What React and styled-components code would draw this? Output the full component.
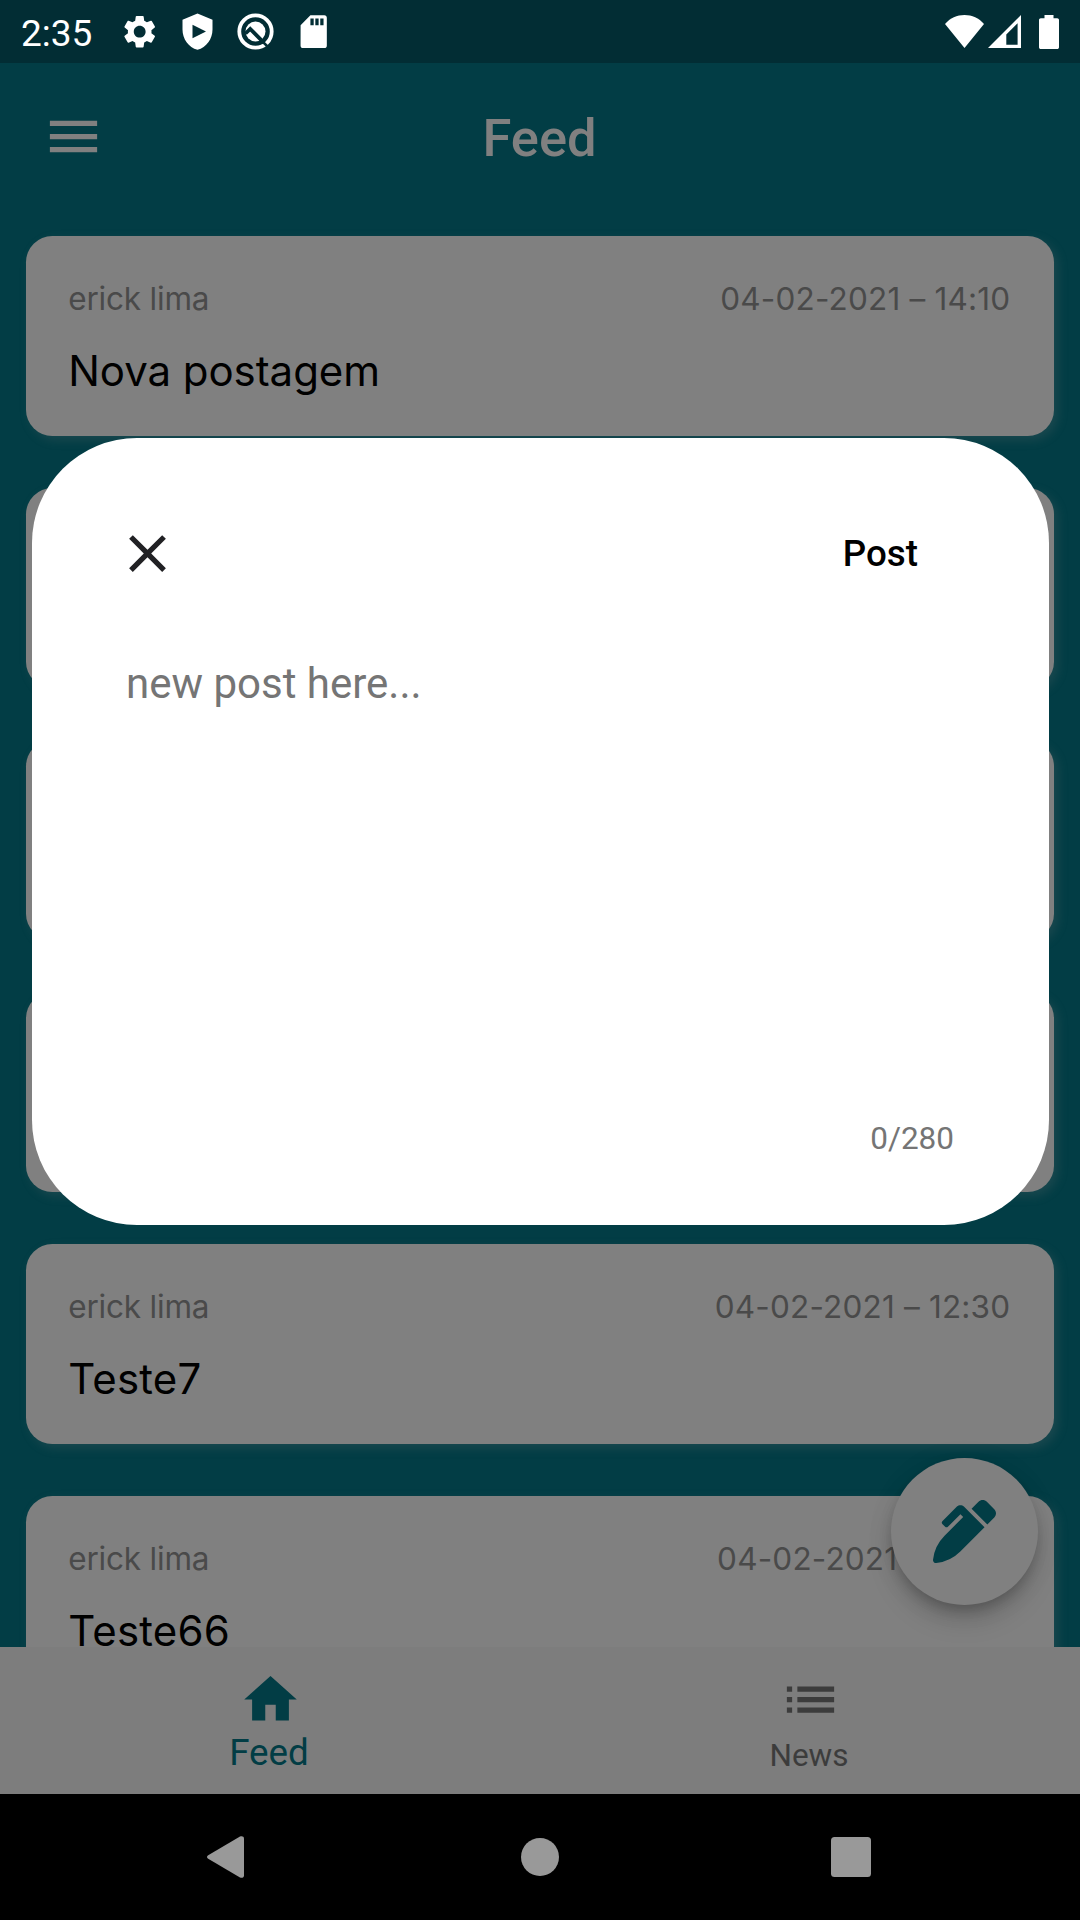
import React from 'react';
import styled, { createGlobalStyle } from 'styled-components';
import { MdMenu, MdClose, MdSettings } from 'react-icons/md';
import { FaPenAlt } from 'react-icons/fa';

const GlobalStyle = createGlobalStyle`
  * { box-sizing: border-box; }
  body { margin: 0; background: #000; }
`;

const Screen = styled.div`
  position: relative;
  display: flex;
  flex-direction: column;
  width: 1080px;
  height: 1920px;
  overflow: hidden;
  background: #023d45;
  font-family: Roboto, sans-serif;
`;

const StatusBar = styled.header`
  display: flex;
  align-items: center;
  justify-content: space-between;
  flex: none;
  height: 63px;
  padding: 0 21px 0 21px;
  background: #022d34;
  color: #fff;
`;

const StatusGroup = styled.div`
  display: flex;
  align-items: center;
  gap: ${(p) => p.$gap}px;
  svg { display: block; }
`;

const Clock = styled.span`
  width: 80px;
  margin-right: 0.4px;
  font-size: 37px;
  line-height: 40px;
  padding-top: 4px;
`;

const AppBar = styled.div`
  display: grid;
  grid-template-columns: 63px 1fr 63px;
  align-items: center;
  flex: none;
  height: 147px;
  padding: 0 42px;
  color: #808080;
  svg { display: block; }
`;

const Title = styled.h1`
  margin: 0 1px 0 0;
  text-align: center;
  font-size: 52.5px;
  font-weight: 500;
  line-height: 62px;
  padding-top: 3px;
`;

const Body = styled.main`
  position: relative;
  flex: 1;
  min-height: 0;
  overflow: hidden;
`;

const Feed = styled.div`
  display: flex;
  flex-direction: column;
  gap: 52.5px;
  padding: 26.25px 26.25px 0;
`;

const Card = styled.article`
  display: flex;
  flex-direction: column;
  flex: none;
  gap: 28px;
  height: 199.5px;
  padding: 43.25px 43.5px 0 42px;
  border-radius: 26.25px;
  background: #808080;
  box-shadow: 4px 4px 11px rgba(128, 118, 118, 0.2);
  font-family: Inter, sans-serif;
`;

const CardMeta = styled.div`
  display: flex;
  justify-content: space-between;
  font-size: 31.5px;
  line-height: 38px;
  color: #4a4a4a;
`;

const Author = styled.span`
  letter-spacing: -0.2px;
`;

const PostDate = styled.span`
  letter-spacing: 0.18px;
`;

const CardText = styled.p`
  margin: 0;
  font-size: 42px;
  line-height: 50px;
  letter-spacing: ${(p) => p.$spacing}px;
  color: #000;
`;

const Fab = styled.button`
  position: absolute;
  right: 42px;
  bottom: 42px;
  display: flex;
  align-items: center;
  justify-content: center;
  width: 147px;
  height: 147px;
  padding: 0;
  border: 0;
  border-radius: 50%;
  background: #808080;
  color: #023d45;
  box-shadow: 0 8px 13px -3px rgba(0, 0, 0, 0.2), 0 16px 26px rgba(0, 0, 0, 0.14),
    0 3px 30px rgba(0, 0, 0, 0.06);
`;

const TabBar = styled.nav`
  display: grid;
  grid-template-columns: 1fr 1fr;
  flex: none;
  height: 147px;
  background: #7d7d7d;
`;

const Tab = styled.div`
  display: flex;
  flex-direction: column;
  align-items: center;
  padding-top: 21px;
  color: ${(p) => (p.$active ? '#023d45' : '#3c3c3c')};
  font-size: ${(p) => (p.$active ? 36.75 : 31.5)}px;
  line-height: 43px;
  svg { display: block; }
`;

const TabLabel = styled.span`
  margin-top: ${(p) => (p.$active ? 0 : 3)}px;
  margin-right: 2px;
`;

const SystemNav = styled.footer`
  display: grid;
  grid-template-columns: 1fr 38px 1fr;
  align-items: center;
  flex: none;
  height: 126px;
  padding: 0 209px 0 207px;
  background: #000;
  svg { display: block; }
  svg:last-child { justify-self: end; }
`;

const Dialog = styled.section`
  position: absolute;
  left: 31.5px;
  top: 437.5px;
  display: flex;
  flex-direction: column;
  width: 1017px;
  height: 787.5px;
  padding: 84px 94.5px 0;
  border-radius: 105px;
  background: #fff;
`;

const DialogHeader = styled.div`
  display: flex;
  align-items: center;
  justify-content: space-between;
  height: 63px;
  padding-right: 36px;
  margin-left: -10.5px;
  color: #212124;
`;

const PostButton = styled.span`
  padding-top: 2px;
  font-size: 36.75px;
  font-weight: 500;
  line-height: 44px;
  color: #000;
`;

const Hint = styled.p`
  flex: 1;
  margin: 74px 0 0;
  font-size: 42px;
  line-height: 50px;
  color: #757575;
`;

const Counter = styled.span`
  align-self: flex-end;
  margin-bottom: 67px;
  font-size: 31.5px;
  line-height: 38px;
  color: #757575;
`;

const POSTS = [
  { date: '04-02-2021 – 14:10', text: 'Nova postagem', spacing: -0.05 },
  { date: '', text: '' },
  { date: '', text: '' },
  { date: '', text: '' },
  { date: '04-02-2021 – 12:30', text: 'Teste7', spacing: 0.2 },
  { date: '04-02-2021 – 12:27', text: 'Teste66', spacing: 0.2 },
];

const BatterySlot = styled.div`
  padding-left: 14px;
`;

const ShieldIcon = () => (
  <svg width="39" height="39" viewBox="0 0 39 39">
    <path
      fill="#fff"
      fillRule="evenodd"
      d="M19.5 1.5 34.5 7.8V17.5C34.5 27 28.5 35.5 19.5 37.8 10.5 35.5 4.5 27 4.5 17.5V7.8ZM14.5 12.7V26.3L28 19.5Z"
    />
  </svg>
);

const LensIcon = () => (
  <svg width="39" height="39" viewBox="0 0 39 39">
    <circle cx="19.5" cy="19.5" r="16.2" fill="none" stroke="#fff" strokeWidth="3.8" />
    <circle cx="19.5" cy="19.5" r="10" fill="#fff" />
    <path d="M9.5 21.5 14.2 17 28 30.8" fill="none" stroke="#022d34" strokeWidth="3.8" />
    <path d="M27 30 34 37" stroke="#022d34" strokeWidth="2.5" />
  </svg>
);

const SdIcon = () => (
  <svg width="39.4" height="39.4" viewBox="0 0 24 24" fill="#fff">
    <path d="M18 2h-8L4.02 8 4 20.5c0 .9.6 1.5 1.5 1.5h13c.9 0 1.5-.6 1.5-1.5v-17c0-.9-.6-1.5-1.5-1.5zM12 8h-2V4h2v4zm3 0h-2V4h2v4zm3 0h-2V4h2v4z" />
  </svg>
);

const WifiIcon = () => (
  <svg width="39" height="33" viewBox="0 0 39 33" fill="#fff">
    <path d="M0 9C5 3 12 0 19.5 0S34 3 39 9L19.5 33Z" />
  </svg>
);

const SignalIcon = () => (
  <svg width="33" height="33" viewBox="0 0 33 33" fill="#fff">
    <path fillRule="evenodd" d="M33 0V33H0ZM29.6 8.2 18.3 19.5V29.8H29.6Z" />
  </svg>
);

const BatteryIcon = () => (
  <svg width="20" height="34" viewBox="0 0 20 34" fill="#fff">
    <path d="M5.5 0h9v3.2h3.7c1 0 1.8.8 1.8 1.8v27.2c0 1-.8 1.8-1.8 1.8H1.8C.8 34 0 33.2 0 32.2V5c0-1 .8-1.8 1.8-1.8h3.7z" />
  </svg>
);

const HomeIcon = () => (
  <svg width="63" height="63" viewBox="0 0 24 24" fill="currentColor">
    <path d="M10 20v-6h4v6h5v-8h3L12 3 2 12h3v8z" />
  </svg>
);

const ListIcon = () => (
  <svg width="63" height="63" viewBox="0 0 24 24" fill="currentColor">
    <path d="M3 13h2v-2H3v2zm0 4h2v-2H3v2zm0-8h2V7H3v2zm4 4h14v-2H7v2zm0 4h14v-2H7v2zM7 7v2h14V7H7z" />
  </svg>
);

export default function App() {
  return (
    <>
      <GlobalStyle />
      <Screen>
        <StatusBar>
          <StatusGroup $gap={18.7}>
            <Clock>2:35</Clock>
            <MdSettings size={39.4} />
            <ShieldIcon />
            <LensIcon />
            <SdIcon />
          </StatusGroup>
          <StatusGroup $gap={4}>
            <WifiIcon />
            <SignalIcon />
            <BatterySlot>
              <BatteryIcon />
            </BatterySlot>
          </StatusGroup>
        </StatusBar>

        <AppBar>
          <MdMenu size={63} />
          <Title>Feed</Title>
        </AppBar>

        <Body>
          <Feed>
            {POSTS.map((post, i) => (
              <Card key={i}>
                {post.text && (
                  <>
                    <CardMeta>
                      <Author>erick lima</Author>
                      <PostDate>{post.date}</PostDate>
                    </CardMeta>
                    <CardText $spacing={post.spacing}>{post.text}</CardText>
                  </>
                )}
              </Card>
            ))}
          </Feed>
          <Fab aria-label="New post">
            <FaPenAlt size={63} />
          </Fab>
        </Body>

        <TabBar>
          <Tab $active>
            <HomeIcon />
            <TabLabel $active>Feed</TabLabel>
          </Tab>
          <Tab>
            <ListIcon />
            <TabLabel>News</TabLabel>
          </Tab>
        </TabBar>

        <SystemNav>
          <svg width="37" height="42" viewBox="0 0 37 42" fill="#999">
            <path d="M1.2 19.2 33 .5C35 -.4 37 .5 37 2.5V39.5C37 41.5 35 42.4 33 41.5L1.2 22.8C-.4 21.8 -.4 20.2 1.2 19.2Z" />
          </svg>
          <svg width="40" height="38" viewBox="0 0 40 38" fill="#999">
            <circle cx="20" cy="19" r="19" />
          </svg>
          <svg width="40" height="40" viewBox="0 0 40 40" fill="#999">
            <rect width="40" height="40" rx="3.5" />
          </svg>
        </SystemNav>

        <Dialog>
          <DialogHeader>
            <MdClose size={63} />
            <PostButton>Post</PostButton>
          </DialogHeader>
          <Hint>new post here...</Hint>
          <Counter>0/280</Counter>
        </Dialog>
      </Screen>
    </>
  );
}
